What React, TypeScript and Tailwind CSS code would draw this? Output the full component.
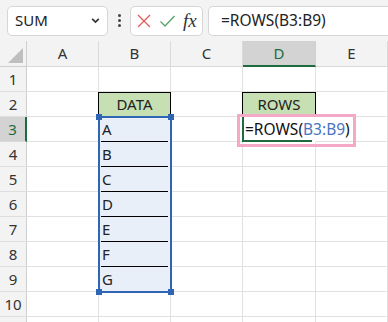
import React from 'react';

const COLS = ['A', 'B', 'C', 'D', 'E'];
const B_VALUES = ['A', 'B', 'C', 'D', 'E', 'F', 'G'];

function FormulaBar() {
  return (
    <div className="h-[41px] bg-[#f3f3f3] flex items-center pl-[7px] gap-0">
      {/* name box */}
      <div className="w-[101px] h-[30px] bg-white border border-[#d6d6d6] rounded-[5px] flex items-center justify-between pl-[7px] pr-[6px]">
        <span className="text-[15px] text-[#222] leading-none">SUM</span>
        <svg width="11" height="11" viewBox="0 0 10 10">
          <path d="M2 3.5 L5 6.5 L8 3.5" fill="none" stroke="#333" strokeWidth="1.5" />
        </svg>
      </div>
      {/* dots */}
      <div className="w-[22px] flex flex-col items-center gap-[2px]">
        <span className="w-[3px] h-[3px] rounded-full bg-[#444]" />
        <span className="w-[3px] h-[3px] rounded-full bg-[#444]" />
        <span className="w-[3px] h-[3px] rounded-full bg-[#444]" />
      </div>
      {/* cancel / enter / fx */}
      <div className="w-[73px] h-[30px] bg-white border border-[#d6d6d6] rounded-[5px] flex items-center pl-[5px] gap-[7px]">
        <svg width="16" height="16" viewBox="0 0 16 16">
          <path d="M2 2 L14 14 M14 2 L2 14" stroke="#e0625d" strokeWidth="1.4" />
        </svg>
        <svg width="17" height="16" viewBox="0 0 17 16">
          <path d="M1.5 8.5 L6 13 L15.5 3" fill="none" stroke="#5aa36b" strokeWidth="1.4" />
        </svg>
        <span className="text-[19px] italic text-[#333] leading-none" style={{ fontFamily: '"Liberation Serif", serif' }}>
          fx
        </span>
      </div>
      {/* formula input */}
      <div className="ml-[5px] flex-1 h-[30px] bg-white border border-[#d6d6d6] border-r-0 rounded-l-[5px] flex items-center pl-[12px]">
        <span className="text-[15.5px] text-[#222] leading-none">=ROWS(B3:B9)</span>
      </div>
    </div>
  );
}

function Sheet() {
  const rows = Array.from({ length: 11 }, (_, i) => i + 1);
  return (
    <div className="relative grid grid-cols-[27px_72px_72px_72px_73px_72px] grid-rows-[26px_repeat(11,25px)]">
      {/* header row */}
      <div className="bg-[#f3f3f3] border-r border-b border-[#cfcfcf] relative">
        <svg className="absolute right-[3px] bottom-[3px]" width="15" height="15" viewBox="0 0 15 15">
          <path d="M15 0 L15 15 L0 15 Z" fill="#bfbfbf" />
        </svg>
      </div>
      {COLS.map((c) =>
        c === 'D' ? (
          <div key={c} className="bg-[#d3d3d3] border-r border-[#cfcfcf] border-b-2 border-b-[#1e6b40] flex items-center justify-center text-[15px] text-[#1e6b40]">
            {c}
          </div>
        ) : (
          <div key={c} className="bg-[#f3f3f3] border-r border-b border-[#d9d9d9] flex items-center justify-center text-[15px] text-[#333]">
            {c}
          </div>
        )
      )}

      {rows.map((r) => (
        <React.Fragment key={r}>
          {r === 3 ? (
            <div className="bg-[#d3d3d3] border-b border-[#d9d9d9] border-r-2 border-r-[#1e6b40] flex items-center justify-center text-[15px] text-[#1e6b40]">
              {r}
            </div>
          ) : (
            <div className="bg-[#f3f3f3] border-r border-b border-[#cfcfcf] border-b-[#dedede] flex items-center justify-center text-[15px] text-[#333]">
              {r <= 10 ? r : ''}
            </div>
          )}
          {COLS.map((c) => {
            if ((c === 'B' || c === 'D') && r === 2) {
              return (
                <div key={c} className="bg-[#c6e0b4] border border-black ml-[-1px] flex items-center justify-center text-[15px] text-[#222]">
                  {c === 'B' ? 'DATA' : 'ROWS'}
                </div>
              );
            }
            if (c === 'B' && r >= 3 && r <= 9) {
              return (
                <div key={c} className="bg-[#e9eff9] border-r border-[#e1e1e1] flex flex-col">
                  <div className="flex-1 flex items-center pl-[3px] text-[15px] text-[#222]">{B_VALUES[r - 3]}</div>
                  <div className={r < 9 ? 'h-px mx-[2px] bg-black' : 'h-px bg-[#e1e1e1]'} />
                </div>
              );
            }
            if (c === 'D' && r === 3) {
              return (
                <div key={c} className="relative bg-white border-l-2 border-[#1e6b40] ml-[-1px] flex items-center overflow-visible">
                  <span className="absolute left-[1px] text-[15.5px] text-[#111] whitespace-nowrap z-10">
                    =ROWS(<span className="text-[#4a74c2]">B3:B9</span>)
                  </span>
                  <span className="absolute left-[-2px] bottom-0 w-[70px] h-[2px] bg-[#1e6b40]" />
                </div>
              );
            }
            return <div key={c} className="border-r border-b border-[#e1e1e1]" />;
          })}
        </React.Fragment>
      ))}

      {/* range reference highlight B3:B9 */}
      <div className="absolute left-[98px] top-[75px] w-[74px] h-[177px] border-2 border-[#2f66b3] pointer-events-none" />
      <span className="absolute left-[96px] top-[73px] w-[6px] h-[6px] bg-[#2f66b3]" />
      <span className="absolute left-[168px] top-[73px] w-[6px] h-[6px] bg-[#2f66b3]" />
      <span className="absolute left-[96px] top-[248px] w-[6px] h-[6px] bg-[#2f66b3]" />
      <span className="absolute left-[168px] top-[248px] w-[6px] h-[6px] bg-[#2f66b3]" />

      {/* annotation frame around edited cell */}
      <div className="absolute left-[237px] top-[73px] w-[119px] h-[33px] border-[3px] border-[#f4aac6] pointer-events-none" />
    </div>
  );
}

export default function App() {
  return (
    <div className="w-[388px] h-[322px] overflow-hidden bg-white" style={{ fontFamily: '"Noto Sans", "Open Sans", sans-serif' }}>
      <FormulaBar />
      <Sheet />
    </div>
  );
}
